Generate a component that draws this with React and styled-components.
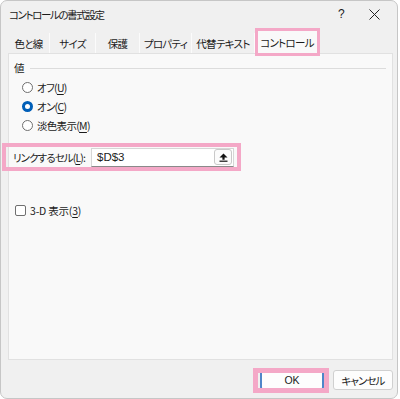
import styled, { createGlobalStyle } from "styled-components";

const GlobalStyle = createGlobalStyle`
  html, body {
    margin: 0;
    padding: 0;
    background: #ffffff;
  }
  body {
    font-family: "Noto Sans CJK JP", "Noto Sans", sans-serif;
    font-feature-settings: "palt";
    color: #1b1b1b;
  }
`;

const PINK = "#f4a8c7";

const Window = styled.div`
  box-sizing: border-box;
  width: 398px;
  height: 399px;
  border: 1px solid #c6c6c6;
  border-radius: 7px;
  background: #f0f0f0;
  display: flex;
  flex-direction: column;
  overflow: hidden;
  font-size: 10.5px;
  letter-spacing: -0.7px;
`;

const TitleBar = styled.div`
  height: 26px;
  display: flex;
  align-items: center;
  padding-left: 8px;
`;

const Title = styled.div`
  flex: 1;
  letter-spacing: -1.4px;
`;

const TitleButton = styled.div`
  width: ${(p) => p.$w}px;
  display: flex;
  align-items: center;
  justify-content: center;
  font-family: "Liberation Sans", sans-serif;
  font-size: 12px;
`;

const TabRow = styled.div`
  margin: 4px 0 0 7px;
  height: 22px;
  display: flex;
  align-items: flex-end;
`;

const Tab = styled.div`
  box-sizing: border-box;
  width: ${(p) => p.$w}px;
  height: ${(p) => (p.$active ? 22 : 20)}px;
  margin-left: ${(p) => (p.$active ? 3 : 0)}px;
  display: flex;
  align-items: center;
  justify-content: center;
  white-space: nowrap;
  background: ${(p) => (p.$active ? "#f9f9f9" : "#f0f0f0")};
  border-right: 1px solid ${(p) => (p.$active ? "transparent" : "#fbfbfb")};
  outline: ${(p) => (p.$active ? `3px solid ${PINK}` : "none")};
  position: relative;
  z-index: ${(p) => (p.$active ? 1 : 0)};
`;

const Panel = styled.div`
  box-sizing: border-box;
  margin: 0 4px 0 7px;
  height: 307px;
  background: #f9f9f9;
  border: 1px solid #e1e1e1;
  padding: 6px 0 0 5px;
  display: flex;
  flex-direction: column;
`;

const GroupHeader = styled.div`
  display: flex;
  align-items: center;
  gap: 6px;
  height: 14px;
  margin-right: 6px;
`;

const Rule = styled.div`
  flex: 1;
  height: 1px;
  background: #dcdcdc;
  margin-top: 2px;
`;

const RadioList = styled.div`
  display: flex;
  flex-direction: column;
  padding: 4px 0 0 8px;
`;

const RadioRow = styled.label`
  height: 19px;
  display: flex;
  align-items: center;
  gap: 4px;
`;

const RadioDot = styled.span`
  box-sizing: border-box;
  width: 11px;
  height: 11px;
  border-radius: 50%;
  border: ${(p) => (p.$on ? "3px solid #005fb8" : "1px solid #6f6f6f")};
  background: #ffffff;
`;

const U = styled.span`
  text-decoration: underline;
  text-underline-offset: 2px;
`;

const LinkRow = styled.div`
  margin: 12px 0 0 -8px;
  width: 231px;
  height: 20px;
  display: flex;
  align-items: center;
  outline: 4px solid ${PINK};
  padding-left: 7px;
  box-sizing: border-box;
`;

const LinkLabel = styled.div`
  width: 78px;
  flex: none;
  white-space: nowrap;
  letter-spacing: -0.9px;
`;

const InputBox = styled.div`
  box-sizing: border-box;
  width: 143px;
  height: 19px;
  background: #ffffff;
  border: 1px solid #d6d6d6;
  border-bottom-color: #8a8a8a;
  display: flex;
  align-items: center;
  justify-content: space-between;
  padding: 0 1px 0 5px;
  font-family: "Liberation Sans", sans-serif;
  font-size: 11.5px;
  letter-spacing: 0;
`;

const CollapseButton = styled.div`
  box-sizing: border-box;
  width: 18px;
  height: 16px;
  border: 1px solid #c9c9c9;
  border-radius: 3px;
  background: #fbfbfb;
  display: flex;
  align-items: center;
  justify-content: center;
`;

const CheckRow = styled.label`
  margin: 35px 0 0 1px;
  display: flex;
  align-items: center;
  gap: 4px;
  height: 16px;
  letter-spacing: -0.2px;
`;

const CheckBox = styled.span`
  box-sizing: border-box;
  width: 11px;
  height: 11px;
  border: 1px solid #6f6f6f;
  border-radius: 2px;
  background: #ffffff;
`;

const Footer = styled.div`
  flex: 1;
  display: flex;
  justify-content: flex-end;
  align-items: flex-start;
  padding: 10px 4px 0 0;
  gap: 9px;
`;

const Button = styled.div`
  box-sizing: border-box;
  position: relative;
  width: ${(p) => p.$w}px;
  height: 20px;
  background: #fdfdfd;
  border: 1px solid #d0d0d0;
  border-left: ${(p) => (p.$primary ? "2px solid #4f86c9" : "1px solid #d0d0d0")};
  border-right: ${(p) => (p.$primary ? "2px solid #4f86c9" : "1px solid #d0d0d0")};
  border-radius: 3px;
  display: flex;
  align-items: center;
  justify-content: center;
  white-space: nowrap;
  font-family: ${(p) => (p.$primary ? '"Liberation Sans", sans-serif' : "inherit")};
  letter-spacing: ${(p) => (p.$primary ? "0" : "-0.9px")};

  &::after {
    content: "";
    display: ${(p) => (p.$primary ? "block" : "none")};
    position: absolute;
    top: -3px;
    bottom: -4px;
    left: -9px;
    right: -7px;
    border: 5px solid ${PINK};
    pointer-events: none;
  }
`;

const tabs = [
  { label: "色と線", w: 42 },
  { label: "サイズ", w: 46 },
  { label: "保護", w: 44 },
  { label: "プロパティ", w: 52 },
  { label: "代替テキスト", w: 63 },
  { label: "コントロール", w: 59, active: true },
];

export default function App() {
  return (
    <>
      <GlobalStyle />
      <Window>
        <TitleBar>
          <Title>コントロールの書式設定</Title>
          <TitleButton $w={20}>?</TitleButton>
          <TitleButton $w={46}>
            <svg width="11" height="11" viewBox="0 0 11 11">
              <path d="M0.5 0.5 L10.5 10.5 M10.5 0.5 L0.5 10.5" stroke="#222" strokeWidth="1" />
            </svg>
          </TitleButton>
        </TitleBar>
        <TabRow>
          {tabs.map((t) => (
            <Tab key={t.label} $w={t.w} $active={t.active}>
              {t.label}
            </Tab>
          ))}
        </TabRow>
        <Panel>
          <GroupHeader>
            <span>値</span>
            <Rule />
          </GroupHeader>
          <RadioList>
            <RadioRow>
              <RadioDot />
              <span>
                オフ(<U>U</U>)
              </span>
            </RadioRow>
            <RadioRow>
              <RadioDot $on />
              <span>
                オン(<U>C</U>)
              </span>
            </RadioRow>
            <RadioRow>
              <RadioDot />
              <span>
                淡色表示(<U>M</U>)
              </span>
            </RadioRow>
          </RadioList>
          <LinkRow>
            <LinkLabel>
              リンクするセル(<U>L</U>):
            </LinkLabel>
            <InputBox>
              <span>$D$3</span>
              <CollapseButton>
                <svg width="9" height="9" viewBox="0 0 9 9">
                  <path d="M4.5 0.5 L8.5 4.5 L5.6 4.5 L5.6 6.8 L3.4 6.8 L3.4 4.5 L0.5 4.5 Z" fill="#111" />
                  <rect x="0.5" y="7.6" width="8" height="1.2" fill="#111" />
                </svg>
              </CollapseButton>
            </InputBox>
          </LinkRow>
          <CheckRow>
            <CheckBox />
            <span>
              3-D 表示(<U>3</U>)
            </span>
          </CheckRow>
        </Panel>
        <Footer>
          <Button $w={64} $primary>
            OK
          </Button>
          <Button $w={60}>キャンセル</Button>
        </Footer>
      </Window>
    </>
  );
}
